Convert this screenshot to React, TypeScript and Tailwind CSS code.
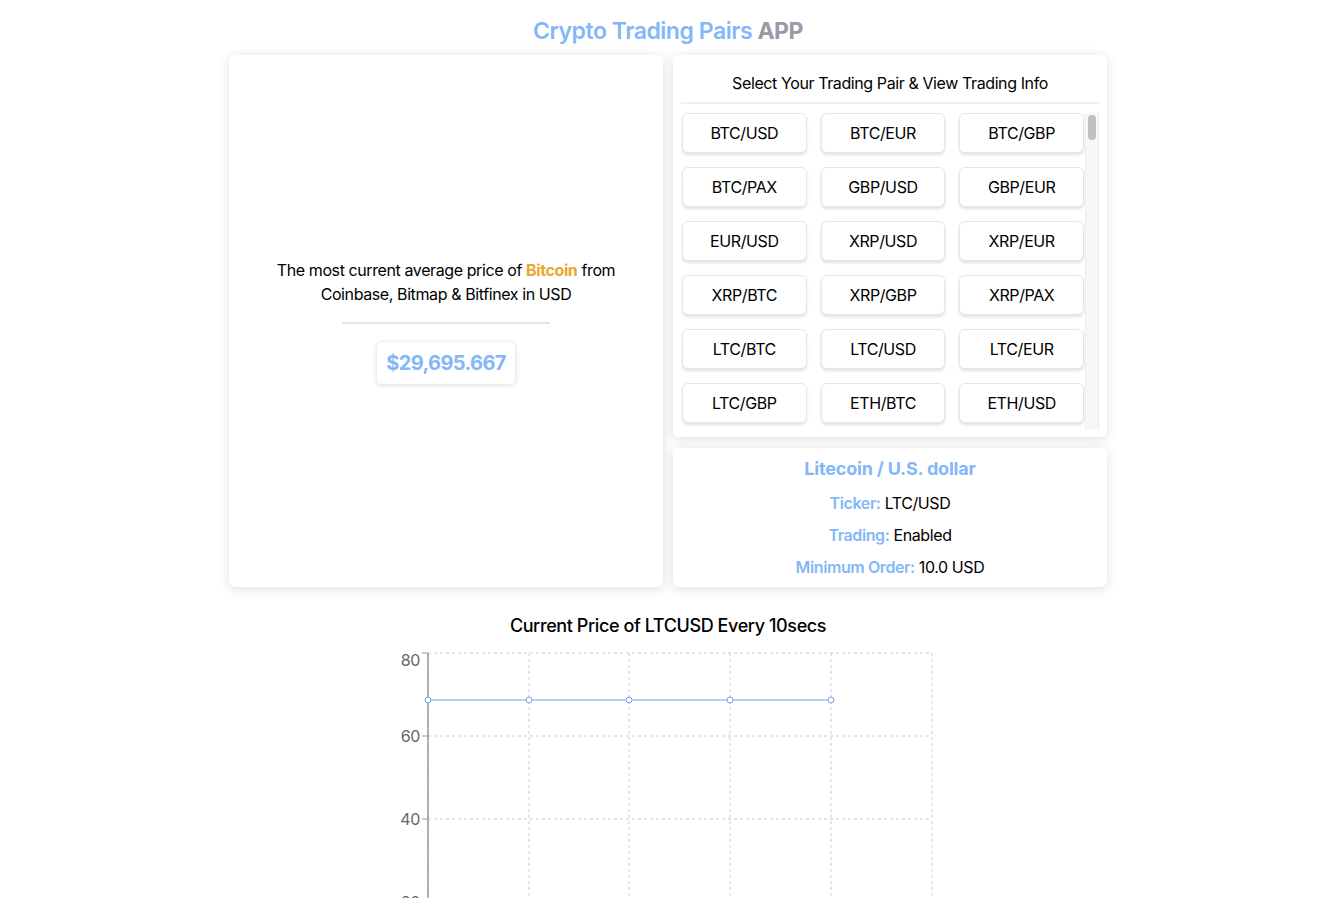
import React from 'react';

const pairs = [
  'BTC/USD', 'BTC/EUR', 'BTC/GBP',
  'BTC/PAX', 'GBP/USD', 'GBP/EUR',
  'EUR/USD', 'XRP/USD', 'XRP/EUR',
  'XRP/BTC', 'XRP/GBP', 'XRP/PAX',
  'LTC/BTC', 'LTC/USD', 'LTC/EUR',
  'LTC/GBP', 'ETH/BTC', 'ETH/USD',
];

const blue = 'text-[#84b7f8]';

const PriceChart: React.FC = () => {
  const xs = [58, 159, 259, 360, 461, 562];
  const ys = [8, 91, 174, 257, 340];
  const labels = ['80', '60', '40', '20', '0'];
  const lineY = 55;
  return (
    <svg width={600} height={380} className="block mx-auto">
      {ys.map((y) => (
        <line key={y} x1={58} x2={562} y1={y} y2={y} stroke="#ccc" strokeDasharray="3 3" />
      ))}
      {xs.map((x) => (
        <line key={x} x1={x} x2={x} y1={8} y2={340} stroke="#ccc" strokeDasharray="3 3" />
      ))}
      <line x1={58} x2={58} y1={8} y2={340} stroke="#999" strokeWidth={1.5} />
      <line x1={58} x2={562} y1={340} y2={340} stroke="#999" strokeWidth={1.5} />
      {ys.map((y, i) => (
        <g key={'t' + y}>
          <line x1={52} x2={58} y1={y} y2={y} stroke="#999" />
          <text
            x={50}
            y={i === 0 ? y + 13 : y + 6}
            textAnchor="end"
            fontSize={16}
            fill="#666"
            fontFamily="Inter, sans-serif"
          >
            {labels[i]}
          </text>
        </g>
      ))}
      <polyline points={xs.slice(0, 5).map((x) => `${x},${lineY}`).join(' ')} fill="none" stroke="#72a1ef" strokeWidth={1} />
      {xs.slice(0, 5).map((x) => (
        <circle key={'c' + x} cx={x} cy={lineY} r={3} fill="#fff" stroke="#72a1ef" strokeWidth={1} />
      ))}
    </svg>
  );
};

export default function App() {
  return (
    <div className="min-h-screen bg-white text-black pr-1 font-['Inter',sans-serif] tracking-[-0.025em]">
      <h1 className="pt-[15px] pb-2 text-center text-[23px] leading-8 font-semibold tracking-[-0.02em]">
        <span className={blue}>Crypto Trading Pairs</span>{' '}
        <span className="text-[#969ba5] font-bold">APP</span>
      </h1>

      <div className="mx-auto w-[878px] flex gap-[10px]">
        {/* Average price */}
        <div className="w-[434px] h-[532px] rounded-md bg-white shadow-[0_2px_12px_rgba(0,0,0,0.13)] flex flex-col items-center justify-center">
          <p className="text-center text-[16px] leading-6">
            The most current average price of <span className="font-bold text-[#e9a82a]">Bitcoin</span> from
            <br />
            Coinbase, Bitmap &amp; Bitfinex in USD
          </p>
          <div className="mt-[16px] w-[208px] h-[2px] bg-[#e3e4ea]" />
          <div className={`mt-[17px] px-[9px] h-[44px] flex items-center rounded-md border border-[#eeeeee] shadow-[0_1px_4px_rgba(0,0,0,0.12)] text-[20px] font-bold tracking-[-0.03em] ${blue}`}>
            $29,695.667
          </div>
        </div>

        <div className="w-[434px] flex flex-col gap-[11px]">
          {/* Pair selector */}
          <div className="h-[382px] rounded-md bg-white shadow-[0_2px_12px_rgba(0,0,0,0.13)] px-2">
            <div className="h-[49px] flex items-end justify-center pb-[7px] border-b-2 border-[#f0f0f2] text-[16px]">
              Select Your Trading Pair &amp; View Trading Info
            </div>
            <div className="mt-[9px] h-[316px] flex">
              <div className="flex-1 overflow-hidden px-px grid grid-cols-3 gap-[14px] content-start">
                {pairs.map((p) => (
                  <button
                    key={p}
                    className="h-[40px] rounded-md border border-[#e6e6e6] bg-white shadow-[0_2px_3px_rgba(0,0,0,0.12)] text-[16px]"
                  >
                    {p}
                  </button>
                ))}
              </div>
              {/* scrollbar */}
              <div className="w-[14px] bg-[#f7f7f7] border-l border-r border-[#ececec] pt-[2px]">
                <div className="mx-auto w-[8px] h-[25px] rounded-full bg-[#c1c1c1]" />
              </div>
            </div>
          </div>

          {/* Pair info */}
          <div className="h-[139px] rounded-md bg-white shadow-[0_2px_12px_rgba(0,0,0,0.13)] flex flex-col items-center pt-[7px] text-[16px]">
            <h2 className={`text-[18px] leading-7 font-bold tracking-[-0.01em] ${blue}`}>Litecoin / U.S. dollar</h2>
            <p className="mt-[8px] leading-6">
              <span className={`font-semibold ${blue}`}>Ticker:</span> LTC/USD
            </p>
            <p className="mt-2 leading-6">
              <span className={`font-semibold ${blue}`}>Trading:</span> Enabled
            </p>
            <p className="mt-2 leading-6">
              <span className={`font-semibold ${blue}`}>Minimum Order:</span> 10.0 USD
            </p>
          </div>
        </div>
      </div>

      <h3 className="mt-[25px] text-center text-[18px] leading-7 font-medium">
        Current Price of LTCUSD Every 10secs
      </h3>
      <div className="mt-[5px] pl-[4px]">
        <PriceChart />
      </div>
    </div>
  );
}
